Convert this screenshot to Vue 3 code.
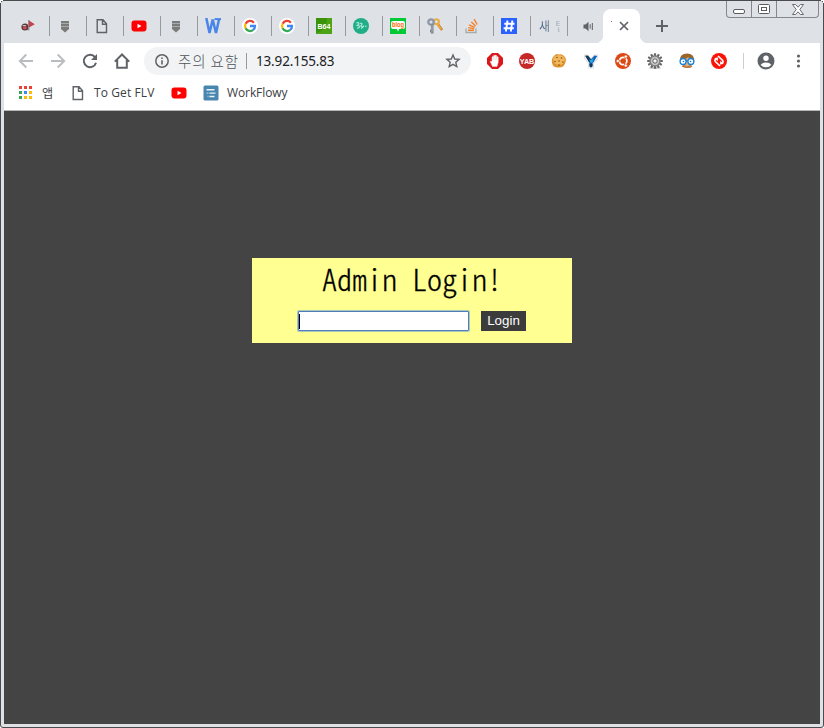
<script setup>
const dots = ['#ea4335', '#ea4335', '#ea4335', '#34a853', '#4285f4', '#fbbc05', '#34a853', '#fbbc05', '#fbbc05']
const teeth = Array.from({ length: 12 }, (_, i) => i * 30)
const tabs = ['flag', 'stack', 'doc', 'youtube', 'stack', 'w', 'google', 'google', 'b64', 'teal', 'blog', 'keys', 'so', 'hash', 'text']
</script>

<template>
  <div class="window">
    <svg class="corner tl" width="3" height="3"><path d="M0 0H3V1H1V3H0Z" fill="#fff" /><path d="M1 1h1v1H1z" fill="#555" /></svg>
    <svg class="corner tr" width="3" height="3"><path d="M0 0H3V3H2V1H0Z" fill="#fff" /><path d="M1 1h1v1H1z" fill="#555" /></svg>
    <div class="win-controls">
      <span class="wc min"><svg width="12" height="5"><rect x=".5" y=".5" width="11" height="4" rx="1.5" fill="#fff" stroke="#5a5c60" /></svg></span>
      <span class="wc max"><svg width="12" height="10"><rect x=".5" y=".5" width="11" height="9" rx="1" fill="#fff" stroke="#5a5c60" /><rect x="3.5" y="3.5" width="5" height="3" fill="#fff" stroke="#5a5c60" /></svg></span>
      <span class="wc close"><svg width="12" height="11" viewBox="0 0 12 11"><path d="M.5.5h3L6 3.2 8.500.5h3L7.800 5.500l3.700 5h-3L6 7.800l-2.500 2.700h-3l3.700-5z" fill="#fff" stroke="#5a5c60" stroke-width=".9" /></svg></span>
    </div>

    <div class="tabstrip">
      <div v-for="(t, i) in tabs" :key="i" class="tab">
        <span v-if="t === 'text'" class="newtab">새 탭</span>
        <svg v-else width="16" height="16" viewBox="0 0 16 16">
          <g v-if="t === 'flag'">
            <circle cx="5" cy="9" r="3.600" fill="#543a3e" /><circle cx="4.800" cy="9.600" r="1.900" fill="#c94d55" /><path d="M2.600 7.500h3.500" stroke="#dedede" stroke-width=".8" />
            <path d="M8.700 12.500V2" stroke="#888" stroke-width="1.200" /><path d="M9 2.600l5.800 3.600L9 9.400z" fill="#c8414d" />
          </g>
          <g v-else-if="t === 'stack'" fill="#7b7b7b">
            <path d="M4 3h8v8H4z" fill="#aaa" /><path d="M4 3h8v2H4zM4 6h8v2H4zM4 9h8v2L8 14.500 4 11z" />
          </g>
          <path v-else-if="t === 'doc'" d="M3.200 1.700h5.800l3.500 4v8.800H3.200zM8.500 1.700v4.500h4" fill="none" stroke="#5f6368" stroke-width="1.400" />
          <g v-else-if="t === 'youtube'"><rect x=".5" y="2.600" width="15" height="10.800" rx="2.800" fill="#f00" /><path d="M6.500 5.700v4.600L10.500 8z" fill="#fff" /></g>
          <g v-else-if="t === 'w'" fill="none" stroke="#4a86e8" stroke-width="2.500"><path d="M1.300 0L4.500 15 7.700 1.500 11 15 14 1.500" stroke-linejoin="bevel" /><path d="M9.500 1.100H16" stroke-width="2" /></g>
          <g v-else-if="t === 'google'">
            <circle cx="8" cy="8" r="8" fill="#fff" />
            <g fill="none" stroke-width="2.300"><path d="M11.900 4.700A5 5 0 0 0 3.600 5.700" stroke="#ea4335" /><path d="M3.600 5.700a5 5 0 0 0 0 4.600" stroke="#fbbc05" /><path d="M3.600 10.300a5 5 0 0 0 7.600 1.600" stroke="#34a853" /><path d="M11.200 11.900A5 5 0 0 0 13 8H8" stroke="#4285f4" /></g>
          </g>
          <g v-else-if="t === 'b64'"><path d="M0 0h16v16H0z" fill="#399407" /><path d="M0 15C8 13 11 8 11 0h5v16H0z" fill="#4ca414" /><text x="8" y="10.800" text-anchor="middle" textLength="13" lengthAdjust="spacingAndGlyphs" class="glyph" font-size="7.500">B64</text></g>
          <g v-else-if="t === 'teal'"><circle cx="8" cy="8" r="8" fill="#20ae89" /><path d="M3.300 5c3-1.500 3.500 1 1.200 2.300 3 .2 2.500 3-.5 2.700M7 5.500c3-1 2 1.500.8 2.500 2 0 2 2 .2 2.500M9.500 9.500l1.500-1.800M12 8.500l1.500-.5" fill="none" stroke="#a8ead8" stroke-width="1.200" /></g>
          <g v-else-if="t === 'blog'"><path d="M0 0h16v16H0z" fill="#04c936" /><path d="M3 3h10q2 0 2 2v4q0 2-2 2H9.200L8 13.500 6.800 11H3Q1 11 1 9V5q0-2 2-2z" fill="#fff" /><text x="8" y="9" text-anchor="middle" textLength="12" lengthAdjust="spacingAndGlyphs" class="glyph orange" font-size="6.300">blog</text></g>
          <g v-else-if="t === 'keys'">
            <path d="M10 5l5 7" stroke="#bc7523" stroke-width="2.500" /><circle cx="9.500" cy="3.800" r="2.500" fill="none" stroke="#edae45" stroke-width="2" /><path d="M10 5.500l4.500 6" stroke="#f2ad3d" stroke-width="1.400" />
            <circle cx="4" cy="4" r="2.700" fill="#dce0e6" stroke="#8b98a6" stroke-width="2.300" /><path d="M5.200 6.500V15.500M5.500 13H3" stroke="#7b8088" stroke-width="2.600" /><path d="M5 7v7.500" stroke="#bfc3ca" stroke-width=".7" />
          </g>
          <g v-else-if="t === 'so'" fill="none"><path d="M2 10.500v4h10v-4" stroke="#aaa" stroke-width="1.300" /><path d="M4 12.200h6M4.200 9.600l6 1M5 6.800l5.700 2.500M7.300 3.900l4.400 4M10.100 1.200l3.100 5.300" stroke="#f48024" stroke-width="1.400" /></g>
          <g v-else-if="t === 'hash'"><path d="M0 0h16v16H0z" fill="#2962ff" /><path d="M6.500 2.500L4.900 13.500M11.400 2.500L9.800 13.500M3.300 5.800h10.200M2.600 10.300h10.200" stroke="#fff" stroke-width="1.900" /></g>
        </svg>
      </div>
      <div class="tab audio"><svg width="11" height="11" viewBox="0 0 11 11"><path d="M.5 3.500h2L5.500.8v9.400L2.500 7.500h-2z" fill="#5f6368" /><path d="M7.200 3.300v4.400M9.400 2v7" stroke="#777" stroke-width="1.200" /></svg></div>
      <div class="tab active"><span class="speck"></span><svg width="10" height="10" viewBox="0 0 10 10"><path d="M1 1l8 8M9 1L1 9" stroke="#5f6368" stroke-width="1.700" /></svg></div>
      <svg class="plus" width="12" height="12"><path d="M6 0v12M0 6h12" stroke="#5f6368" stroke-width="2" /></svg>
    </div>

    <div class="toolbar">
      <div class="nav">
        <svg width="16" height="16" viewBox="0 0 16 16"><path d="M15 8H2M8.300 1.500L1.800 8l6.500 6.500" fill="none" stroke="#babcbe" stroke-width="1.900" /></svg>
        <svg width="16" height="16" viewBox="0 0 16 16"><path d="M1 8h13M7.700 1.500L14.200 8l-6.500 6.500" fill="none" stroke="#babcbe" stroke-width="1.900" /></svg>
        <svg width="16" height="16" viewBox="0 0 16 16"><path d="M13 4.200A6.200 6.200 0 1 0 14 9.700" fill="none" stroke="#5f6368" stroke-width="2" /><path d="M15 1v6H9z" fill="#5f6368" /></svg>
        <svg width="16" height="16" viewBox="0 0 16 16"><path d="M.8 8.600L8 1.500l7.200 7.100M3.200 7v7.700h9.600V7" fill="none" stroke="#5f6368" stroke-width="2" /></svg>
      </div>
      <div class="omnibox">
        <svg width="14" height="14" viewBox="0 0 14 14"><circle cx="7" cy="7" r="6.200" fill="none" stroke="#5f6368" stroke-width="1.500" /><path d="M7 6.200v4.200M7 3.500v1.500" stroke="#5f6368" stroke-width="1.600" /></svg>
        <span class="warn">주의 요함</span><span class="bar"></span><span class="url">13.92.155.83</span>
        <svg class="star" width="16" height="16" viewBox="0 0 16 16"><path d="M8 2l1.700 4 4.400.4-3.300 2.900 1 4.300L8 11.300l-3.800 2.300 1-4.300L1.900 6.400 6.300 6z" fill="none" stroke="#5f6368" stroke-width="1.400" /></svg>
      </div>
      <div class="exts">
        <svg width="16" height="16" viewBox="0 0 16 16"><path d="M5 0h6l5 5v6l-5 5H5l-5-5V5z" fill="#da171d" /><path d="M5.500 13.500L3.200 8.500q.6-1.200 1.800.3V4q.6-1.200 1.400 0v3V2.800q.8-1.200 1.600 0V7 2.600q.8-1 1.600 0V7.200 4q.9-1 1.600 0v5.500L10 13.500z" fill="#fff" stroke="#e8dada" stroke-width=".5" /></svg>
        <svg width="16" height="16" viewBox="0 0 16 16"><circle cx="8" cy="8" r="8" fill="#c62828" /><text x="8" y="10.600" text-anchor="middle" textLength="14.500" lengthAdjust="spacingAndGlyphs" class="glyph" font-size="7.300">YAB</text></svg>
        <svg width="16" height="16" viewBox="0 0 16 16"><path d="M3 3q2-3 5-1.500 3-1 5 1.500 3 3 1.500 6-1 5.500-6.500 5.500Q2 15 1 10 0 6 3 3z" fill="#df952f" /><ellipse cx="8" cy="7" rx="5.800" ry="4.800" fill="#f2b85c" /><g fill="#8a5014"><circle cx="6" cy="4.500" r=".8" /><circle cx="10.500" cy="5" r=".8" /><circle cx="4" cy="8.500" r=".8" /><circle cx="8" cy="8" r=".8" /><circle cx="12" cy="9" r=".8" /><circle cx="8" cy="12" r=".8" /></g></svg>
        <svg width="16" height="16" viewBox="0 0 16 16"><path d="M1.500 2.200h3L8 6l3.500-3.800h3.200v3L10.500 10.500V15h-5v-4.500L1.500 5z" fill="#fff" stroke="#e2e2e2" stroke-width="1.200" /><path d="M2 2.800l3-.2L8 6.200V11L5.800 9z" fill="#123858" /><path d="M7.500 6.700l4-4.200 2.700.6-3.500 6L9.500 10v3.500L8 14.500l-1.500-1V10z" fill="#1264bd" /><path d="M6 6.200l2 1 2.500-2.300L9.500 9 8 10z" fill="#20b0ee" /><path d="M6.500 10.500h3v2.500L8 14.500l-1.500-1.500z" fill="#12375b" /></svg>
        <svg width="16" height="16" viewBox="0 0 16 16"><circle cx="8" cy="8" r="8" fill="#dd4814" /><circle cx="8.200" cy="8" r="3.700" fill="none" stroke="#fff" stroke-width="1.700" stroke-dasharray="6.700 1.050" stroke-dashoffset="3.350" /><g fill="#fff" stroke="#dd4814" stroke-width=".6"><circle cx="2.800" cy="8" r="1.600" /><circle cx="10.800" cy="3.500" r="1.600" /><circle cx="10.800" cy="12.500" r="1.600" /></g></svg>
        <svg width="16" height="16" viewBox="0 0 16 16"><ellipse cx="8" cy="15" rx="6" ry="1" fill="#ccc" /><g fill="#666"><rect v-for="r in teeth" :key="r" x="6.900" y=".2" width="2.200" height="3.500" rx=".5" :transform="`rotate(${r} 8 8)`" /></g><circle cx="8" cy="8" r="5" fill="#c6c6c6" stroke="#808080" stroke-width="1.500" /><circle cx="8" cy="8" r="2.200" fill="#f3f3f3" stroke="#666" stroke-width="1" /></svg>
        <svg width="16" height="16" viewBox="0 0 16 16"><path d="M.8 7Q1 .5 8 .5T15.200 7l-.6 3H1.500z" fill="#9a6729" /><path d="M3 6q5 0 6-2Q10 6 13 6v6q-1 3-5 3t-5-3z" fill="#e5af79" /><path d="M2.500 13.500L5 12l3 1.500L11 12l2.500 1.500Q11 15.500 8 15t-5.500-1.500z" fill="#b97a45" /><g fill="#fff" stroke="#1781d5" stroke-width="1.300"><circle cx="4.100" cy="8.500" r="3" /><circle cx="11.900" cy="8.500" r="3" /></g><path d="M6.800 7.700h2.400" stroke="#1781d5" /><circle cx="4.500" cy="8.500" r=".8" fill="#176bb0" /><circle cx="11.500" cy="8.500" r=".8" fill="#176bb0" /></svg>
        <svg width="16" height="16" viewBox="0 0 16 16"><circle cx="8" cy="8" r="8" fill="#fa1408" /><path d="M9 13L4.300 8.500q-1-1.500.5-3M7 3l4.700 4.500q1 1.500-.5 3" fill="none" stroke="#fff" stroke-width="1.700" /><path d="M3.300 5l3.700-.5-.2 3.700zM12.700 11l-3.700.5.200-3.700z" fill="#fff" /></svg>
      </div>
      <span class="divider"></span>
      <svg class="avatar" width="18" height="18" viewBox="0 0 18 18"><circle cx="9" cy="9" r="8.500" fill="#5f6368" /><circle cx="9" cy="6.300" r="2.700" fill="#fff" /><path d="M3.700 12.800Q5.500 10.600 9 10.600t5.300 2.200Q12.500 15.300 9 15.300t-5.300-2.500z" fill="#fff" /></svg>
      <svg class="menu" width="5" height="14"><g fill="#5f6368"><circle cx="2.500" cy="2" r="1.600" /><circle cx="2.500" cy="7" r="1.600" /><circle cx="2.500" cy="12" r="1.600" /></g></svg>
    </div>

    <div class="bookmarks">
      <svg class="apps" width="13" height="13"><rect v-for="(c, i) in dots" :key="i" :x="(i % 3) * 5" :y="Math.floor(i / 3) * 5" width="3" height="3" :fill="c" /></svg>
      <span class="bm app">앱</span>
      <svg class="bdoc" width="16" height="16" viewBox="0 0 16 16"><path d="M3.200 1.700h5.800l3.500 4v8.800H3.200zM8.500 1.700v4.500h4" fill="none" stroke="#5f6368" stroke-width="1.400" /></svg>
      <span class="bm flv">To Get FLV</span>
      <svg class="byt" width="16" height="16" viewBox="0 0 16 16"><rect x=".5" y="2.600" width="15" height="10.800" rx="2.800" fill="#f00" /><path d="M6.500 5.700v4.600L10.500 8z" fill="#fff" /></svg>
      <svg class="bwf" width="16" height="16" viewBox="0 0 16 16"><rect x=".5" y=".5" width="15" height="15" rx="1.500" fill="#4886ae" /><path d="M3.500 4.700h8M6.500 8.100h6M6.500 11.500h5" fill="none" stroke="#e8f2f8" stroke-width="1.400" /><path d="M3.500 8.100h2M4.500 11.500h1" fill="none" stroke="#a9c9dd" stroke-width="1.400" /></svg>
      <span class="bm wf">WorkFlowy</span>
    </div>

    <main class="page">
      <form class="login" @submit.prevent>
        <h1>Admin Login!</h1>
        <div class="row"><div class="field"><span class="caret"></span></div><button>Login</button></div>
      </form>
    </main>
  </div>
</template>

<style>
body { overflow: hidden; background: #fff; }
</style>

<style scoped>
* { box-sizing: border-box; }
svg { display: block; flex: none; }
.window { position: relative; width: 824px; height: 728px; padding: 0 3px 3px; border: 1px solid #4b4a4d; border-radius: 3px; background: #dee1e6; display: flex; flex-direction: column; font-family: "Noto Sans", "Noto Sans CJK KR", sans-serif; }
.corner { position: absolute; top: -1px; }
.tl { left: -1px; }
.tr { right: -1px; }
.win-controls { position: absolute; top: 0; right: 4px; width: 93px; height: 17px; display: flex; border: 1px solid #85878b; border-top: 0; border-radius: 0 0 4px 4px; }
.wc { display: flex; align-items: center; justify-content: center; height: 16px; border-right: 1px solid #85878b; }
.min { width: 25px; padding-top: 5px; }
.max { width: 25px; }
.close { width: 41px; border-right: 0; }
.tabstrip { height: 42px; flex: none; display: flex; padding: 8px 0 0 9px; }
.tab { width: 37px; height: 34px; flex: none; display: flex; align-items: center; padding-left: 7px; position: relative; }
.tab::after { content: ""; width: 1px; height: 20px; background: #97999e; margin-left: auto; }
.newtab { width: 22px; padding: 1px 0 0 1px; overflow: hidden; white-space: nowrap; font-size: 12px; line-height: 16px; word-spacing: 2px; color: #3d5878; mask-image: linear-gradient(90deg, rgba(0, 0, 0, .85) 30%, rgba(0, 0, 0, .2)); }
.audio { width: 35px; padding-left: 15px; }
.audio::after, .active::after { display: none; }
.active { background: #fff; border-radius: 8px 8px 0 0; padding-left: 16px; }
.active::before { content: ""; position: absolute; left: -8px; right: -8px; bottom: 0; height: 8px; background: radial-gradient(circle at 0 0, transparent 8px, #fff 8.500px) 0 0 / 8px 8px no-repeat, radial-gradient(circle at 100% 0, transparent 8px, #fff 8.500px) 100% 0 / 8px 8px no-repeat; }
.speck { position: absolute; left: 8px; top: 12px; width: 1px; height: 1px; background: #b06b51; }
.plus { margin: 11px 0 0 16px; }
.glyph { font-family: "Liberation Sans", sans-serif; font-weight: 700; fill: #fff; }
.orange { fill: #ff6b00; }
.toolbar { height: 36px; flex: none; background: #fff; display: flex; align-items: center; padding-left: 14px; }
.nav { display: flex; gap: 16px; }
.omnibox { width: 327px; height: 28px; margin-left: 14px; border-radius: 14px; background: #f1f3f4; display: flex; align-items: center; padding: 0 10px 0 11px; font-size: 14px; line-height: 20px; white-space: nowrap; }
.warn { width: 61px; margin-left: 9px; font-family: "Noto Sans CJK KR", sans-serif; font-weight: 300; color: #4f5358; font-size: 14.500px; letter-spacing: .9px; }
.bar { width: 1px; height: 16px; background: #96999d; margin-left: 7px; }
.url { margin-left: 9px; color: #202124; font-family: "Noto Sans", sans-serif; font-size: 13.500px; letter-spacing: -.16px; }
.star { margin-left: auto; }
.exts { margin-left: 16px; display: flex; gap: 16px; }
.divider { width: 1px; height: 16px; background: #ccced1; margin-left: 16px; }
.avatar { margin-left: 13px; }
.menu { margin-left: 21px; }
.bookmarks { height: 32px; flex: none; background: #fff; border-bottom: 1px solid #b5b6b8; display: flex; align-items: center; padding: 0 0 4px 15px; font-size: 12px; line-height: 18px; color: #3c4043; white-space: nowrap; }
.bm { font-family: "Open Sans", "Noto Sans CJK KR", sans-serif; padding-top: 1px; }
.app { margin-left: 10px; width: 12px; padding-top: 2px; font-size: 12px; }
.bdoc { margin-left: 16px; }
.flv { margin-left: 8px; width: 61px; letter-spacing: .1px; }
.byt { margin-left: 16px; }
.bwf { margin-left: 16px; }
.wf { margin-left: 8px; letter-spacing: -.1px; }
.page { flex: 1; background: #444; display: flex; justify-content: center; align-items: flex-start; padding-top: 147px; }
.login { width: 320px; height: 85px; background: #ffff92; display: flex; flex-direction: column; }
h1 { margin: 0; height: 53px; padding: 0 0 0 70px; font: 300 30px/40px "Noto Sans CJK KR", monospace; font-feature-settings: "hwid"; color: #000; -webkit-text-stroke: .3px #000; white-space: nowrap; }
.row { display: flex; gap: 12px; padding-left: 46px; }
.field { width: 171px; height: 20px; background: #fff; border: 1px solid #527dbd; box-shadow: 0 0 0 1px #a8c8b8; padding: 2px 0 0; border-radius: 1px; }
.caret { display: block; width: 1px; height: 15px; background: #000; }
button { width: 45px; height: 20px; border: 0; padding: 0; background: #3c3c3c; color: #fff; font: 13.330px/20px "Liberation Sans", Arial, sans-serif; }
</style>
